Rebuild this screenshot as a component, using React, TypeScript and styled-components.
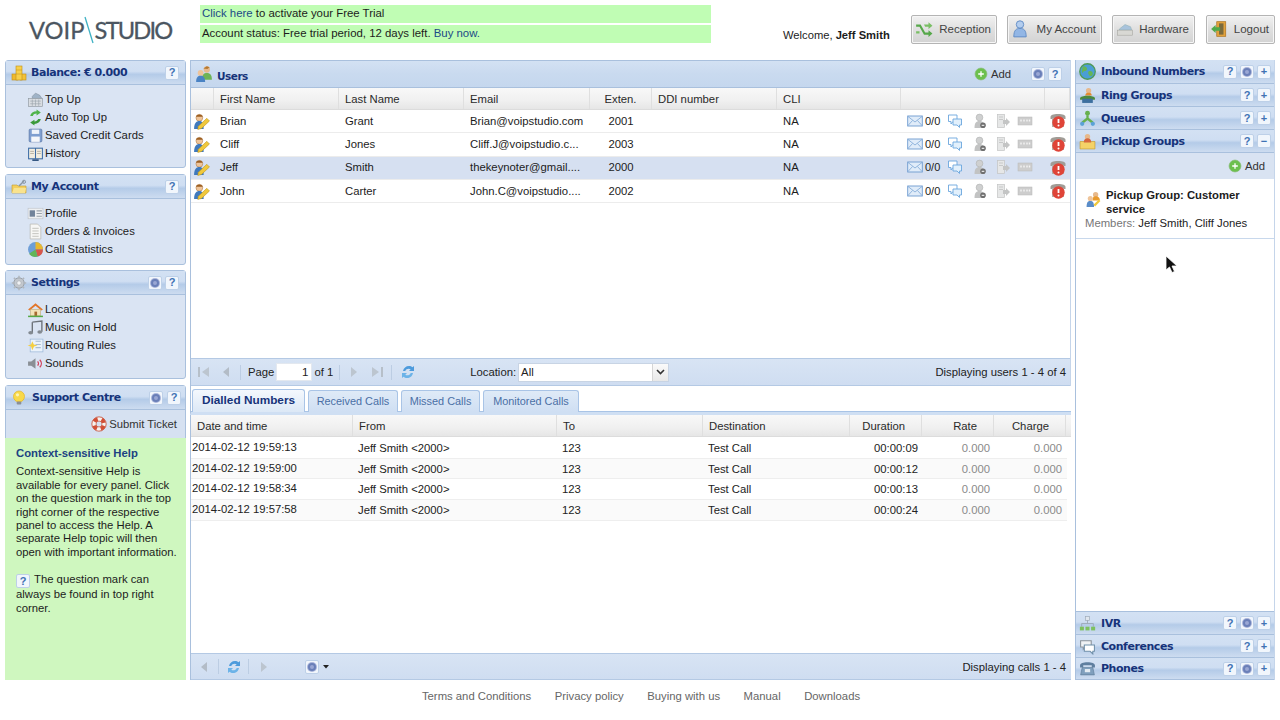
import React from "react";
import styled, { createGlobalStyle } from "styled-components";

const Global = createGlobalStyle`
  html, body { margin: 0; padding: 0; background: #fff; }
  body { font-family: "Liberation Sans", Arial, sans-serif; font-size: 11.3px; color: #1c1c1c; }
`;

const drawings: Record<string, React.ReactNode> = {
  coins: <><rect x="1" y="9" width="6" height="6" fill="#eeb92e" stroke="#c08e16" strokeWidth=".6"/><rect x="9" y="9" width="6" height="6" fill="#f2c23a" stroke="#c08e16" strokeWidth=".6"/><rect x="5" y="1" width="6" height="14" fill="#f7d04a" stroke="#c08e16" strokeWidth=".6"/><path d="M5 5h6M5 9h6" stroke="#c08e16" strokeWidth=".5"/></>,
  register: <><path d="M5 5l3-3 4 2 2 3H5z" fill="#9fb3c7" stroke="#7c8a98" strokeWidth=".5"/><rect x="1.500" y="7" width="13" height="7.500" fill="#d9dde2" stroke="#8e979f" strokeWidth=".6"/><path d="M3 9.500h10M3 12h10M5 8v6M8 8v6M11 8v6" stroke="#9aa3ab" strokeWidth=".6"/></>,
  recycle: <><path d="M3 6.500C3.500 3.500 6 2 9 2V.5l4 2.700-4 2.800V4.300C7.500 4.300 6 5 5.500 6.500z" fill="#4fb34a"/><path d="M13 9.500c-.5 3-3 4.500-6 4.500v1.500l-4-2.700 4-2.800v1.700c1.500 0 3-.7 3.500-2.200z" fill="#3a9a3a"/></>,
  floppy: <><rect x="2" y="2" width="12" height="12" rx="1" fill="#7f9fd0" stroke="#54709f" strokeWidth=".6"/><rect x="4.500" y="2.500" width="7" height="4" fill="#eef3fa"/><rect x="4" y="9" width="8" height="5" fill="#f5f7fa"/></>,
  book: <><rect x="1" y="2.500" width="14" height="11" fill="#3f6ea6"/><path d="M2 3.500h5.500v9H2zM8.500 3.500H14v9H8.500z" fill="#f1ede0"/><path d="M3 6h3.500M3 8h3.500M9.500 6H13M9.500 8H13" stroke="#9b9486" strokeWidth=".6"/><rect x="5" y="13.500" width="6" height="1.500" fill="#2b4e7b"/></>,
  folderKey: <><path d="M1 6h5l1 1h8v7H1z" fill="#f3cf5f" stroke="#c49a2c" strokeWidth=".6"/><path d="M1 14l2-5h12l-1 5z" fill="#f9e38e"/><path d="M8 7l5-5" stroke="#8a97a5" strokeWidth="1.400"/><circle cx="13" cy="2.800" r="1.600" fill="none" stroke="#8a97a5"/></>,
  card: <><rect x="1" y="3" width="14" height="10" fill="#eef0f2" stroke="#b7bcc2" strokeWidth=".5"/><rect x="2.500" y="5" width="5" height="6" fill="#71839a"/><path d="M9 5.500h5M9 8h5M9 10.500h5" stroke="#9aa2ab"/></>,
  doc: <><path d="M3 1h7l3 3v11H3z" fill="#f7f7f5" stroke="#b8b8b2" strokeWidth=".7"/><path d="M5 5h6M5 7.500h6M5 10h6M5 12.500h6" stroke="#b3b3ad" strokeWidth=".7"/></>,
  pie: <><circle cx="8" cy="8" r="7" fill="#6d9ed8"/><path d="M8 8V1a7 7 0 0 1 7 7z" fill="#e9b82f"/><path d="M8 8h7a7 7 0 0 1-5 6.700z" fill="#d9574b"/><path d="M8 8l2 6.700A7 7 0 0 1 2 12z" fill="#62b558"/></>,
  gear: <><circle cx="8" cy="8" r="5.200" fill="#c3c8ce" stroke="#9aa1a9"/><circle cx="8" cy="8" r="2.200" fill="#f0f2f4" stroke="#a2a8ae" strokeWidth=".6"/><path d="M8 .8v2.600M8 12.600v2.600M.8 8h2.600M12.600 8h2.600M2.900 2.900l1.900 1.900M11.200 11.200l1.900 1.900M13.100 2.900l-1.900 1.900M4.800 11.200l-1.900 1.900" stroke="#b0b6bd" strokeWidth="1.500"/></>,
  house: <><path d="M1 8l7-6 7 6-1.500 1L8 4.500 2.500 9z" fill="#e2762b"/><rect x="3.500" y="8" width="9" height="6" fill="#f3e3b8" stroke="#bfa262" strokeWidth=".5"/><rect x="7" y="10" width="2.500" height="4" fill="#a6692f"/><path d="M1 14.500h14" stroke="#55a845" strokeWidth="1.400"/></>,
  music: <><path d="M5 3l9-1v10" fill="none" stroke="#6d737a" strokeWidth="1.300"/><path d="M5 3v10" stroke="#6d737a" strokeWidth="1.300"/><ellipse cx="3.500" cy="13" rx="2.300" ry="1.700" fill="#838a91"/><ellipse cx="12" cy="12.200" rx="2.300" ry="1.700" fill="#838a91"/></>,
  routing: <><rect x="3" y="2" width="12" height="12" fill="#eaf2fb" stroke="#9db9d8" strokeWidth=".7"/><path d="M8 4h5M8 7h5M8 10h5" stroke="#a9bdd1"/><path d="M5 4l1.400 3L10 8 6.600 9 5 12.500 3.800 9 .5 8l3.300-1z" fill="#f4cf42"/></>,
  speaker: <><path d="M1 6h3l4-3v10L4 10H1z" fill="#8a8f95"/><path d="M10 6c1 1 1 3 0 4M12 4.500c2 2 2 5 0 7" fill="none" stroke="#d0405a" strokeWidth="1.200"/></>,
  bulb: <><circle cx="8" cy="6.500" r="5.500" fill="#f8d94a" stroke="#e3b32a" strokeWidth=".7"/><circle cx="6.500" cy="4.800" r="1.600" fill="#fdf3b7"/><rect x="5.700" y="11.500" width="4.600" height="3" rx="1" fill="#8b8f96"/></>,
  buoy: <><circle cx="8" cy="8" r="7" fill="#d24f36"/><circle cx="8" cy="8" r="5" fill="none" stroke="#f6f2ee" strokeWidth="4" strokeDasharray="3.930 3.930" strokeDashoffset="2"/><circle cx="8" cy="8" r="7.200" fill="none" stroke="#c9543c" strokeWidth=".8"/><circle cx="8" cy="8" r="3" fill="#d6e1f1" stroke="#c9543c" strokeWidth=".7"/></>,
  users: <><circle cx="10.500" cy="4" r="2.800" fill="#e7b98c"/><path d="M6 13c0-5 2-6 4.500-6S15 8 15 13z" fill="#6fb356"/><circle cx="5" cy="7" r="2.600" fill="#eec49a"/><path d="M1 15c0-4 1.500-5.500 4-5.500S9 11 9 15z" fill="#4a83c4"/><path d="M7.500 3l3-2 2.500 1-2 1.500z" fill="#b5782e"/></>,
  userEdit: <><circle cx="6" cy="4.500" r="3.200" fill="#eec49a" stroke="#a8743f" strokeWidth=".5"/><path d="M2.800 3.500c1-2.800 5.400-2.800 6.400 0z" fill="#9c5f22"/><path d="M1 15c0-5 2-7.500 5-7.500s4 2 4 7.500z" fill="#3f79bd"/><path d="M5 12.500l8-7.500 2.500 2.500-7.500 7-3.500 1z" fill="#f0c83c" stroke="#b78f1a" strokeWidth=".5"/></>,
  mail: <><rect x=".7" y="3" width="14.600" height="10" fill="#e0ecf9" stroke="#6e9bcf" strokeWidth=".9"/><path d="M1 3.500l7 5.500 7-5.500M1 12.500l4.500-5M15 12.500l-4.500-5" fill="none" stroke="#7ea7d6" strokeWidth=".8"/></>,
  chat: <><path d="M1.500 2h8.500v6.500H6L4 11V8.500H1.500z" fill="#fff" stroke="#6ba6de" strokeWidth=".9"/><path d="M6 6h8.500v6H12.500v2.500L10 12H6z" fill="#e2f0fc" stroke="#6ba6de" strokeWidth=".9"/></>,
  userGray: <><circle cx="7.500" cy="4.500" r="3.400" fill="#cfd0d0" stroke="#a9aaaa" strokeWidth=".5"/><path d="M2.500 15c0-5 1.500-7 5-7s5 2 5 7z" fill="#c2c3c3"/><circle cx="11" cy="12.300" r="2.800" fill="#6f6f6f"/><path d="M9.700 12.300h2.600" stroke="#fff"/></>,
  docArrow: <><rect x="2.500" y="1.500" width="7" height="13" fill="#e6e7e7" stroke="#c3c4c4" strokeWidth=".7"/><path d="M4 4h4M4 6.500h4" stroke="#c8c9c9"/><path d="M8 7h3V5l4 4-4 4v-2H8z" fill="#c4c5c5"/></>,
  dots: <><rect x="1" y="4" width="14" height="8" fill="#cdcdcd" stroke="#b9b9b9" strokeWidth=".5"/><path d="M4 6.500v2M7 6.500v2M10 6.500v2M12.500 6.500v2" stroke="#f4f4f4" strokeWidth="1.400"/></>,
  phoneStop: <><path d="M.5 4c0-2 2.500-3 7.500-3s7.500 1 7.500 3v2H.5z" fill="#a09c96"/><rect x="2" y="5" width="12" height="9" fill="#b5b0aa"/><circle cx="8.500" cy="9.500" r="6.200" fill="#df4438"/><path d="M8.500 6v4" stroke="#fff" strokeWidth="1.800"/><circle cx="8.500" cy="12.500" r="1" fill="#fff"/></>,
  add: <><circle cx="8" cy="8" r="6.800" fill="#6cc04e" stroke="#88bb77" strokeWidth=".8"/><path d="M8 4.800v6.400M4.800 8h6.400" stroke="#fff" strokeWidth="1.500"/></>,
  refresh: <><path d="M3 7c.5-3 3-5 6-5 1.500 0 2.500.5 3.500 1.300L14 2v5h-5l1.700-1.700C9 4 6 4.700 5.300 7z" fill="#4d9bdc"/><path d="M13 9c-.5 3-3 5-6 5-1.500 0-2.500-.5-3.500-1.300L2 14V9h5l-1.700 1.700C7 12 10 11.300 10.700 9z" fill="#6cb3e8"/></>,
  first: <><path d="M3 3v10" stroke="#b6bfc9" strokeWidth="2"/><path d="M13 3v10L6 8z" fill="#bcc5cf"/></>,
  prev: <path d="M11 3v10L5 8z" fill="#b3bcc7"/>,
  next: <path d="M5 3v10l6-5z" fill="#bcc5cf"/>,
  last: <><path d="M13 3v10" stroke="#b6bfc9" strokeWidth="2"/><path d="M3 3v10l7-5z" fill="#bcc5cf"/></>,
  globe: <><circle cx="8" cy="8" r="7.300" fill="#4a9ed6" stroke="#4f9a57" strokeWidth="1.200"/><path d="M4 3c2 0 4 1 3.500 3S4 7 3.500 9 2 6 4 3zM9 8c2-1 4 0 4 2s-2 3-3 2-2-3-1-4z" fill="#65b557"/></>,
  ring: <><circle cx="9" cy="3.500" r="2.500" fill="#e7b98c"/><path d="M6 8c0-2 1.500-2.500 3-2.500s3 .5 3 2.500z" fill="#e38a2f"/><path d="M1 10c3-2.500 11-2.500 14 0v2H1z" fill="#4b8a3c"/><rect x="3" y="11" width="10" height="4" fill="#3d6f9f"/></>,
  queue: <><circle cx="8" cy="3" r="2.300" fill="#67b04e"/><path d="M8 5v4M8 8L3 12M8 8l5 4" stroke="#67b04e" strokeWidth="2.200"/><circle cx="3" cy="13" r="2" fill="#5aa2d6"/><circle cx="13" cy="13" r="2" fill="#5aa2d6"/></>,
  pickup: <><path d="M1 8h14v7H1z" fill="#f4d267" stroke="#c59b2c" strokeWidth=".6"/><circle cx="8" cy="3.500" r="2.500" fill="#e7b98c"/><path d="M4.500 9c0-3 1.500-4 3.500-4s3.500 1 3.500 4z" fill="#d5673e"/></>,
  group: <><circle cx="10" cy="3.500" r="2.500" fill="#e7b98c"/><path d="M7 9c0-3 1-4 3-4s4 1 4 4z" fill="#e89a2e"/><circle cx="5" cy="7" r="2.400" fill="#eec49a"/><path d="M1.500 15c0-4 1-5.500 3.500-5.500S8.500 11 8.500 15z" fill="#5a8cc8"/><path d="M8 13l5-5 1.500 1.500-5 5z" fill="#f0c83c"/></>,
  ivr: <><rect x="6" y="1.500" width="4" height="3.500" fill="#dfe6ee" stroke="#9aa7b5" strokeWidth=".6"/><path d="M8 5v3M2.500 11V8h11v3" fill="none" stroke="#9aa7b5" strokeWidth=".8"/><rect x=".8" y="11" width="3.800" height="3.500" fill="#7dc15f"/><rect x="6.100" y="11" width="3.800" height="3.500" fill="#7dc15f"/><rect x="11.400" y="11" width="3.800" height="3.500" fill="#7dc15f"/></>,
  conf: <><path d="M1.500 2.500h10v6H6L4 10.500v-2H1.500z" fill="#f0f2f4" stroke="#8b939b"/><path d="M5 6.500h9.500v6H13v2.500l-2.500-2.500H5z" fill="#fff" stroke="#6f8fa9"/></>,
  phone: <><path d="M1 5c0-2 3-3 7-3s7 1 7 3v2h-3V5H4v2H1z" fill="#5f7f9f"/><path d="M3 7h10l1.500 7h-13z" fill="#7f9fbd" stroke="#54718e" strokeWidth=".5"/><rect x="5.500" y="8.500" width="5" height="3" fill="#e4ecf3"/></>,
  shuffle: <><path d="M1 4h4l4 7h3V9l3.500 3-3.500 3v-2H8L4 6H1z" fill="#56a84a"/><path d="M1 10h3v2H1zM8 4h4V2l3.500 3L12 8V6H9z" fill="#79bf64"/></>,
  person: <><circle cx="8" cy="4" r="3.300" fill="#b3cdee" stroke="#5e89c3" strokeWidth=".8"/><path d="M2.500 15c0-6 2-7.500 5.500-7.500s5.500 1.500 5.500 7.500z" fill="#92b6e5" stroke="#5e89c3" strokeWidth=".8"/></>,
  hardware: <><path d="M3 8l5-4 5 2 1 3H3z" fill="#a8c3dc" stroke="#8aa" strokeWidth=".4"/><rect x="1.500" y="9" width="13" height="4.500" fill="#d8d8d4" stroke="#a3a39d" strokeWidth=".5"/></>,
  door: <><rect x="6" y="1.500" width="8" height="13" fill="#e3a23c" stroke="#a96f1b" strokeWidth=".6"/><rect x="8" y="3" width="4" height="10" fill="#7b6a3c"/><path d="M1 8l4-3.500V6.500h4v3H5v2z" fill="#4fa94a"/></>,
};

const Svg = styled.svg<{ $size: number }>`
  width: ${(p) => p.$size}px;
  height: ${(p) => p.$size}px;
  flex: none;
  display: block;
`;

const Icon = ({ n, size = 16 }: { n: string; size?: number }) => (
  <Svg $size={size} viewBox="0 0 16 16">{drawings[n]}</Svg>
);

const Page = styled.div`
  width: 1280px;
  height: 720px;
  position: relative;
  overflow: hidden;
  display: flex;
  flex-direction: column;
`;

const Header = styled.header`
  height: 60px;
  flex: none;
  display: flex;
  box-sizing: border-box;
`;

const Logo = styled.div`
  width: 200px;
  flex: none;
  box-sizing: border-box;
  padding: 15px 0 0 29px;
  display: flex;
  align-items: center;
  height: 45px;
  font-family: Lato, sans-serif;
  font-size: 23.700px;
  -webkit-text-stroke: 0.3px #4b5661;
  color: #4b5661;
  svg { margin: 0 -1px 0 -1px; }
`;

const LogoTail = styled.span`
  letter-spacing: -1.800px;
`;

const Notices = styled.div`
  width: 511px;
  flex: none;
  padding-top: 5px;
  display: flex;
  flex-direction: column;
  gap: 2px;
`;

const Notice = styled.div`
  height: 18px;
  line-height: 17px;
  background: #c0fdb4;
  padding-left: 2px;
  font-size: 11.400px;
  a { color: #1b4a86; text-decoration: none; }
`;

const Welcome = styled.div`
  margin-left: 72px;
  padding-top: 29px;
  width: 128px;
  flex: none;
  font-size: 11.200px;
  white-space: nowrap;
  b { font-weight: bold; }
`;

const NavGroup = styled.div`
  display: flex;
  padding-top: 15px;
  gap: 10px;
  align-items: flex-start;
`;

const NavBtn = styled.div<{ $w: number }>`
  width: ${(p) => p.$w}px;
  height: 29px;
  box-sizing: border-box;
  border: 1px solid #b4b4b4;
  border-radius: 2px;
  background: linear-gradient(#f1f1f1, #dedede 55%, #d3d3d3);
  box-shadow: inset 0 0 0 1px #f6f6f6;
  display: flex;
  align-items: center;
  padding: 0 5px 2px 3px;
  justify-content: space-between;
  font-size: 11.500px;
  color: #444;
`;

const LogoutBtn = styled(NavBtn)`
  margin-left: 1px;
`;

const Main = styled.main`
  height: 620px;
  flex: none;
  display: flex;
  padding-left: 5px;
  gap: 4px;
`;

const LeftCol = styled.aside`
  width: 181px;
  flex: none;
  display: flex;
  flex-direction: column;
`;

const SidePanel = styled.section<{ $h: number; $mb?: number }>`
  height: ${(p) => p.$h}px;
  margin-bottom: ${(p) => p.$mb ?? 6}px;
  box-sizing: border-box;
  border: 1px solid #a9c0dd;
  border-radius: 3px;
  background: #dae4f3;
  flex: none;
  display: flex;
  flex-direction: column;
`;

const TitleBar = styled.div<{ $h?: number; $pr?: number; $gap?: number }>`
  height: ${(p) => p.$h ?? 24}px;
  flex: none;
  box-sizing: border-box;
  border-bottom: 1px solid #a9c0dd;
  background: linear-gradient(#d3e1f3, #cfdef2 45%, #b4cbe8 58%, #cddcf0);
  display: flex;
  align-items: center;
  padding: 0 ${(p) => p.$pr ?? 6}px 0 5px;
  gap: ${(p) => p.$gap ?? 3}px;
`;

const TitleText = styled.span`
  font-family: "DejaVu Sans", sans-serif;
  font-weight: bold;
  font-size: 11px;
  letter-spacing: -0.450px;
  color: #16337a;
  margin-left: 1px;
  margin-right: auto;
  white-space: nowrap;
`;

const SquareBtn = styled.div`
  width: 14px;
  height: 14px;
  flex: none;
  box-sizing: border-box;
  border: 1px solid #bdd0e8;
  border-radius: 2px;
  background: #f1f6fc;
  display: flex;
  align-items: center;
  justify-content: center;
  font-weight: bold;
  font-size: 11px;
  line-height: 1;
  color: #3f72b4;
`;

const GearDot = styled.div`
  width: 8px;
  height: 8px;
  border-radius: 50%;
  background: #9aa7d4;
  box-shadow: 0 0 0 1px #aab5da;
  border: 2px solid #6a7fb8;
  box-sizing: border-box;
`;

const Help = () => <SquareBtn>?</SquareBtn>;
const GearBtn = () => <SquareBtn><GearDot /></SquareBtn>;
const Toggle = ({ open }: { open?: boolean }) => <SquareBtn>{open ? "−" : "+"}</SquareBtn>;

const Menu = styled.div`
  padding: 5px 0 0 21px;
`;

const MenuItem = styled.div`
  height: 18px;
  display: flex;
  align-items: center;
  gap: 1px;
  white-space: nowrap;
`;

const SubmitBar = styled.div`
  height: 28px;
  flex: none;
  box-sizing: border-box;
  background: #d6e1f1;
  display: flex;
  align-items: center;
  justify-content: flex-end;
  gap: 2px;
  padding-right: 8px;
  color: #333;
`;

const HelpBody = styled.div`
  flex: 1;
  background: #cff7bf;
  padding: 9px 4px 0 11px;
  line-height: 13.400px;
  margin: 0 -1px -1px -1px;
`;

const HelpTitle = styled.div`
  font-weight: bold;
  color: #1c4282;
  margin-bottom: 5px;
`;

const HelpGap = styled.div`
  height: 13.400px;
`;

const InlineHelp = styled.span`
  display: inline-flex;
  vertical-align: -2px;
  margin-right: 4px;
`;

const Center = styled.div`
  width: 881px;
  flex: none;
  display: flex;
  flex-direction: column;
`;

const UsersPanel = styled.section`
  height: 326px;
  flex: none;
  display: flex;
  flex-direction: column;
  box-sizing: border-box;
  border-left: 1px solid #a9c0dd;
  border-right: 1px solid #c5d5ea;
`;

const UsersTitle = styled.div`
  height: 28px;
  flex: none;
  box-sizing: border-box;
  border-top: 1px solid #a9c0dd;
  border-bottom: 1px solid #a9c0dd;
  background: linear-gradient(#d3e1f3, #c9daef 50%, #c5d7ee);
  display: flex;
  align-items: center;
  padding: 0 8px 0 4px;
  gap: 3px;
`;

const UsersLabel = styled.span`
  font-family: "DejaVu Sans", sans-serif;
  font-weight: bold;
  font-size: 10.500px;
  letter-spacing: -0.500px;
  color: #16337a;
  margin: 3px auto 0 1px;
`;

const AddLink = styled.span<{ $mr?: number }>`
  display: flex;
  align-items: center;
  gap: 3px;
  color: #333;
  margin-right: ${(p) => p.$mr ?? 0}px;
`;

const HeaderRow = styled.div<{ $cols: string; $h?: number }>`
  display: grid;
  grid-template-columns: ${(p) => p.$cols};
  height: ${(p) => p.$h ?? 22}px;
  flex: none;
  background: linear-gradient(#f8f8f8, #f0f0f0 60%, #e6e6e6);
  border-bottom: 1px solid #dcdcdc;
  box-sizing: border-box;
`;

const HeadCell = styled.div<{ $align?: string; $pr?: number }>`
  border-right: 1px solid #dfdfdf;
  padding: 0 ${(p) => p.$pr ?? 6}px 0 6px;
  display: flex;
  align-items: center;
  justify-content: ${(p) => p.$align ?? "flex-start"};
  color: #2a2a2a;
  white-space: nowrap;
`;

const Row = styled.div<{ $cols: string; $selected?: boolean }>`
  display: grid;
  grid-template-columns: ${(p) => p.$cols};
  height: 23.300px;
  box-sizing: border-box;
  border-bottom: 1px solid #ececec;
  background: ${(p) => (p.$selected ? "#d6e0f1" : "#fff")};
`;

const Cell = styled.div<{ $align?: string }>`
  padding: 0 6px 1px;
  display: flex;
  align-items: center;
  justify-content: ${(p) => p.$align ?? "flex-start"};
  white-space: nowrap;
  overflow: hidden;
`;

const IconCell = styled(Cell)<{ $pl?: number }>`
  padding: 0 0 0 ${(p) => p.$pl ?? 2}px;
`;

const Actions = styled.div`
  display: flex;
  align-items: center;
  padding: 0 0 1px 6px;
  font-size: 11px;
`;

const ActionIcon = styled.span<{ $ml?: number }>`
  display: flex;
  margin-left: ${(p) => p.$ml ?? 0}px;
`;

const Grow = styled.div<{ $pt?: number }>`
  flex: 1;
  min-height: 0;
  overflow: hidden;
  padding-top: ${(p) => p.$pt ?? 0}px;
`;

const Toolbar = styled.div<{ $h: number; $pr?: number }>`
  height: ${(p) => p.$h}px;
  flex: none;
  box-sizing: border-box;
  border-top: 1px solid #b4c9e4;
  border-bottom: 1px solid #b4c9e4;
  background: linear-gradient(#d8e4f4, #cfddf1);
  display: flex;
  align-items: center;
  padding: 0 ${(p) => p.$pr ?? 4}px 0 5px;
  color: #222;
`;

const Sep = styled.div<{ $ml: number; $mr: number }>`
  width: 1px;
  height: 15px;
  background: #bccde3;
  margin: 0 ${(p) => p.$mr}px 0 ${(p) => p.$ml}px;
  flex: none;
`;

const Spaced = styled.span<{ $ml?: number }>`
  display: flex;
  align-items: center;
  margin-left: ${(p) => p.$ml ?? 0}px;
  white-space: nowrap;
`;

const PageInput = styled.div`
  width: 36px;
  height: 18px;
  margin: 0 2px 0 2px;
  background: #fff;
  border: 1px solid #e3e8ef;
  box-sizing: border-box;
  text-align: right;
  padding-right: 3px;
  line-height: 17px;
  font-size: 11.500px;
`;

const Combo = styled.div`
  width: 151px;
  height: 19px;
  margin-left: 2px;
  background: #fff;
  border: 1px solid #c8d4e4;
  box-sizing: border-box;
  display: flex;
  align-items: center;
  padding-left: 2px;
`;

const ComboArrow = styled.div`
  margin-left: auto;
  width: 15px;
  height: 17px;
  background: linear-gradient(#fafafa, #e8e8e8);
  border-left: 1px solid #d5d5d5;
  display: flex;
  align-items: center;
  justify-content: center;
  svg { display: block; }
`;

const ToolbarEnd = styled.span`
  margin-left: auto;
  white-space: nowrap;
`;

const TabsBar = styled.div`
  height: 29px;
  flex: none;
  box-sizing: border-box;
  display: flex;
  align-items: flex-end;
  gap: 3px;
  padding-left: 1px;
  border-bottom: 3px solid #cfdff3;
  border-left: 1px solid #a9c0dd;
  box-shadow: inset 0 -1px 0 #a9c4e6;
`;

const Tab = styled.div<{ $w: number; $active?: boolean }>`
  width: ${(p) => p.$w}px;
  height: ${(p) => (p.$active ? 23 : 22)}px;
  box-sizing: border-box;
  border: 1px solid #a9c4e6;
  border-bottom: none;
  border-radius: 3px 3px 0 0;
  background: ${(p) => (p.$active ? "linear-gradient(#f4f8fd, #dce8f6)" : "linear-gradient(#dfeaf7, #cfdff3)")};
  color: ${(p) => (p.$active ? "#16337a" : "#4a6fa5")};
  font-weight: ${(p) => (p.$active ? "bold" : "normal")};
  font-size: ${(p) => (p.$active ? "11.800px" : "10.900px")};
  display: flex;
  align-items: center;
  justify-content: center;
  padding-bottom: 2px;
`;

const CallsArea = styled.section`
  flex: 1;
  min-height: 0;
  display: flex;
  flex-direction: column;
  border-left: 1px solid #a9c0dd;
`;

const CallRow = styled.div<{ $cols: string; $even: boolean }>`
  display: grid;
  grid-template-columns: ${(p) => p.$cols};
  height: 20.700px;
  box-sizing: border-box;
  border-bottom: 1px solid #eeeeee;
  background: ${(p) => (p.$even ? "#fafafa" : "#fff")};
  margin-right: 4px;
`;

const CallCell = styled.div<{ $right?: boolean; $muted?: boolean; $date?: boolean }>`
  display: flex;
  align-items: center;
  justify-content: ${(p) => (p.$right ? "flex-end" : "flex-start")};
  padding: ${(p) => (p.$date ? "0 0 2px 1px" : p.$right ? "0 4px 0 0" : "0 0 0 5px")};
  color: ${(p) => (p.$muted ? "#8a8a8a" : "#222")};
  white-space: nowrap;
`;

const Right = styled.aside`
  width: 198px;
  flex: none;
  display: flex;
  flex-direction: column;
  border-right: 1px solid #c5d5ea;
  border-left: 1px solid #a9c0dd;
  box-sizing: content-box;
`;

const AccTitle = styled(TitleBar)`
  padding: 0 3px 0 3px;
`;

const AccText = styled(TitleText)`
  margin-left: 2px;
`;

const AddBar = styled.div`
  height: 26px;
  flex: none;
  background: #d9e3f2;
  display: flex;
  align-items: center;
  justify-content: flex-end;
  padding-right: 9px;
`;

const GroupList = styled.div`
  flex: 1;
  min-height: 0;
  background: #fff;
  border-bottom: 1px solid #a9c0dd;
`;

const GroupItem = styled.div`
  height: 60px;
  box-sizing: border-box;
  border-bottom: 1px solid #c8d8ec;
  padding: 10px 8px 0 9px;
`;

const GroupHead = styled.div`
  display: flex;
  gap: 4px;
  font-weight: bold;
  line-height: 13.500px;
  svg { margin-top: 2px; }
`;

const Members = styled.div`
  margin-top: 1px;
  color: #222;
  span { color: #777; }
`;

const Footer = styled.footer`
  flex: 1;
  display: flex;
  justify-content: center;
  gap: 23.500px;
  padding: 10px 0 0 2px;
  color: #666;
`;

const Cursor = styled.svg`
  position: absolute;
  left: 1165px;
  top: 255px;
  width: 13px;
  height: 18px;
`;

const userCols = "23px 125px 125px 126px 62px 125px 124px 144px 25px";
const callCols = "162px 204px 146px 147px 72px 72px 72px";

const users = [
  ["Brian", "Grant", "Brian@voipstudio.com", "2001"],
  ["Cliff", "Jones", "Cliff.J@voipstudio.c...", "2003"],
  ["Jeff", "Smith", "thekeynoter@gmail....", "2000"],
  ["John", "Carter", "John.C@voipstudio....", "2002"],
];

const calls = [
  ["2014-02-12 19:59:13", "00:00:09"],
  ["2014-02-12 19:59:00", "00:00:12"],
  ["2014-02-12 19:58:34", "00:00:13"],
  ["2014-02-12 19:57:58", "00:00:24"],
];

const Side = ({ icon, title, gear, pr, gap }: { icon: string; title: string; gear?: boolean; pr?: number; gap?: number }) => (
  <TitleBar $pr={pr} $gap={gap}>
    <Icon n={icon} />
    <TitleText>{title}</TitleText>
    {gear && <GearBtn />}
    <Help />
  </TitleBar>
);

const Acc = ({ icon, title, gear, open, h = 23 }: { icon: string; title: string; gear?: boolean; open?: boolean; h?: number }) => (
  <AccTitle $h={h}>
    <Icon n={icon} size={17} />
    <AccText>{title}</AccText>
    <Help />
    {gear && <GearBtn />}
    <Toggle open={open} />
  </AccTitle>
);

export default function App() {
  return (
    <Page>
      <Global />
      <Header>
        <Logo>
          VOIP
          <svg width="12" height="28" viewBox="0 0 12 28"><path d="M2 1l8 26" stroke="#3fb1c4" strokeWidth="1.300" /></svg>
          <LogoTail>STUDIO</LogoTail>
        </Logo>
        <Notices>
          <Notice><a>Click here</a> to activate your Free Trial</Notice>
          <Notice>Account status: Free trial period, 12 days left. <a>Buy now.</a></Notice>
        </Notices>
        <Welcome>Welcome, <b>Jeff Smith</b></Welcome>
        <NavGroup>
          <NavBtn $w={86}><Icon n="shuffle" size={18} />Reception</NavBtn>
          <NavBtn $w={95}><Icon n="person" size={18} />My Account</NavBtn>
          <NavBtn $w={83}><Icon n="hardware" size={18} />Hardware</NavBtn>
          <LogoutBtn $w={69}><Icon n="door" size={18} />Logout</LogoutBtn>
        </NavGroup>
      </Header>
      <Main>
        <LeftCol>
          <SidePanel $h={108}>
            <Side icon="coins" title="Balance: € 0.000" />
            <Menu>
              <MenuItem><Icon n="register" size={17} />Top Up</MenuItem>
              <MenuItem><Icon n="recycle" size={17} />Auto Top Up</MenuItem>
              <MenuItem><Icon n="floppy" size={17} />Saved Credit Cards</MenuItem>
              <MenuItem><Icon n="book" size={17} />History</MenuItem>
            </Menu>
          </SidePanel>
          <SidePanel $h={91} $mb={5}>
            <Side icon="folderKey" title="My Account" />
            <Menu>
              <MenuItem><Icon n="card" size={17} />Profile</MenuItem>
              <MenuItem><Icon n="doc" size={17} />Orders &amp; Invoices</MenuItem>
              <MenuItem><Icon n="pie" size={17} />Call Statistics</MenuItem>
            </Menu>
          </SidePanel>
          <SidePanel $h={109}>
            <Side icon="gear" title="Settings" gear />
            <Menu>
              <MenuItem><Icon n="house" size={17} />Locations</MenuItem>
              <MenuItem><Icon n="music" size={17} />Music on Hold</MenuItem>
              <MenuItem><Icon n="routing" size={17} />Routing Rules</MenuItem>
              <MenuItem><Icon n="speaker" size={17} />Sounds</MenuItem>
            </Menu>
          </SidePanel>
          <SidePanel $h={295} $mb={0}>
            <Side icon="bulb" title="Support Centre" gear pr={4} gap={4} />
            <SubmitBar><Icon n="buoy" />Submit Ticket</SubmitBar>
            <HelpBody>
              <HelpTitle>Context-sensitive Help</HelpTitle>
              Context-sensitive Help is available for every panel. Click on the question mark in the top right corner of the respective panel to access the Help. A separate Help topic will then open with important information.
              <HelpGap />
              <InlineHelp><Help /></InlineHelp>The question mark can always be found in top right corner.
            </HelpBody>
          </SidePanel>
        </LeftCol>

        <Center>
          <UsersPanel>
            <UsersTitle>
              <Icon n="users" size={18} />
              <UsersLabel>Users</UsersLabel>
              <AddLink $mr={17}><Icon n="add" size={14} />Add</AddLink>
              <GearBtn />
              <Help />
            </UsersTitle>
            <HeaderRow $cols={userCols}>
              <HeadCell />
              <HeadCell>First Name</HeadCell>
              <HeadCell>Last Name</HeadCell>
              <HeadCell>Email</HeadCell>
              <HeadCell $align="center">Exten.</HeadCell>
              <HeadCell>DDI number</HeadCell>
              <HeadCell>CLI</HeadCell>
              <HeadCell />
              <HeadCell />
            </HeaderRow>
            <Grow>
              {users.map((u, i) => (
                <Row key={u[0]} $cols={userCols} $selected={i === 2}>
                  <IconCell><Icon n="userEdit" size={17} /></IconCell>
                  <Cell>{u[0]}</Cell>
                  <Cell>{u[1]}</Cell>
                  <Cell>{u[2]}</Cell>
                  <Cell $align="center">{u[3]}</Cell>
                  <Cell />
                  <Cell>NA</Cell>
                  <Actions>
                    <Icon n="mail" />
                    <ActionIcon $ml={2}>0/0</ActionIcon>
                    <ActionIcon $ml={7}><Icon n="chat" /></ActionIcon>
                    <ActionIcon $ml={9}><Icon n="userGray" /></ActionIcon>
                    <ActionIcon $ml={7}><Icon n="docArrow" /></ActionIcon>
                    <ActionIcon $ml={6}><Icon n="dots" /></ActionIcon>
                  </Actions>
                  <IconCell $pl={5}><Icon n="phoneStop" /></IconCell>
                </Row>
              ))}
            </Grow>
            <Toolbar $h={28}>
              <Icon n="first" />
              <Spaced $ml={6}><Icon n="prev" /></Spaced>
              <Sep $ml={6} $mr={7} />
              <Spaced>Page</Spaced>
              <PageInput>1</PageInput>
              <Spaced>of 1</Spaced>
              <Sep $ml={6} $mr={6} />
              <Icon n="next" />
              <Spaced $ml={7}><Icon n="last" /></Spaced>
              <Sep $ml={6} $mr={8} />
              <Icon n="refresh" />
              <Spaced $ml={54}>Location:</Spaced>
              <Combo>
                All
                <ComboArrow><svg width="9" height="6" viewBox="0 0 9 6"><path d="M1 1l3.500 3.500L8 1" fill="none" stroke="#333" strokeWidth="1.600" /></svg></ComboArrow>
              </Combo>
              <ToolbarEnd>Displaying users 1 - 4 of 4</ToolbarEnd>
            </Toolbar>
          </UsersPanel>

          <TabsBar>
            <Tab $w={113} $active>Dialled Numbers</Tab>
            <Tab $w={90}>Received Calls</Tab>
            <Tab $w={79}>Missed Calls</Tab>
            <Tab $w={96}>Monitored Calls</Tab>
          </TabsBar>

          <CallsArea>
            <HeaderRow $cols={callCols}>
              <HeadCell>Date and time</HeadCell>
              <HeadCell>From</HeadCell>
              <HeadCell>To</HeadCell>
              <HeadCell>Destination</HeadCell>
              <HeadCell $align="flex-end" $pr={16}>Duration</HeadCell>
              <HeadCell $align="flex-end" $pr={16}>Rate</HeadCell>
              <HeadCell $align="flex-end" $pr={16}>Charge</HeadCell>
            </HeaderRow>
            <Grow $pt={1}>
              {calls.map((c, i) => (
                <CallRow key={c[0]} $cols={callCols} $even={i % 2 === 1}>
                  <CallCell $date>{c[0]}</CallCell>
                  <CallCell>Jeff Smith &lt;2000&gt;</CallCell>
                  <CallCell>123</CallCell>
                  <CallCell>Test Call</CallCell>
                  <CallCell $right>{c[1]}</CallCell>
                  <CallCell $right $muted>0.000</CallCell>
                  <CallCell $right $muted>0.000</CallCell>
                </CallRow>
              ))}
            </Grow>
            <Toolbar $h={27} $pr={5}>
              <Icon n="prev" />
              <Sep $ml={6} $mr={7} />
              <Icon n="refresh" />
              <Sep $ml={6} $mr={7} />
              <Icon n="next" />
              <Spaced $ml={33}><GearBtn /></Spaced>
              <Spaced $ml={4}><svg width="7" height="4" viewBox="0 0 7 4"><path d="M0 0h6L3 3.500z" fill="#222" /></svg></Spaced>
              <ToolbarEnd>Displaying calls 1 - 4</ToolbarEnd>
            </Toolbar>
          </CallsArea>
        </Center>

        <Right>
          <Acc icon="globe" title="Inbound Numbers" gear h={24} />
          <Acc icon="ring" title="Ring Groups" />
          <Acc icon="queue" title="Queues" />
          <Acc icon="pickup" title="Pickup Groups" open />
          <AddBar><AddLink><Icon n="add" size={14} />Add</AddLink></AddBar>
          <GroupList>
            <GroupItem>
              <GroupHead><Icon n="group" size={17} /><span>Pickup Group: Customer service</span></GroupHead>
              <Members><span>Members:</span> Jeff Smith, Cliff Jones</Members>
            </GroupItem>
          </GroupList>
          <Acc icon="ivr" title="IVR" gear />
          <Acc icon="conf" title="Conferences" />
          <Acc icon="phone" title="Phones" gear h={22} />
        </Right>
      </Main>
      <Footer>
        <span>Terms and Conditions</span>
        <span>Privacy policy</span>
        <span>Buying with us</span>
        <span>Manual</span>
        <span>Downloads</span>
      </Footer>
      <Cursor viewBox="0 0 13 18"><path d="M1 1v14l3.500-3 2.500 5.500 2.500-1L7 11h5z" fill="#111" stroke="#fff" strokeWidth=".8" /></Cursor>
    </Page>
  );
}
